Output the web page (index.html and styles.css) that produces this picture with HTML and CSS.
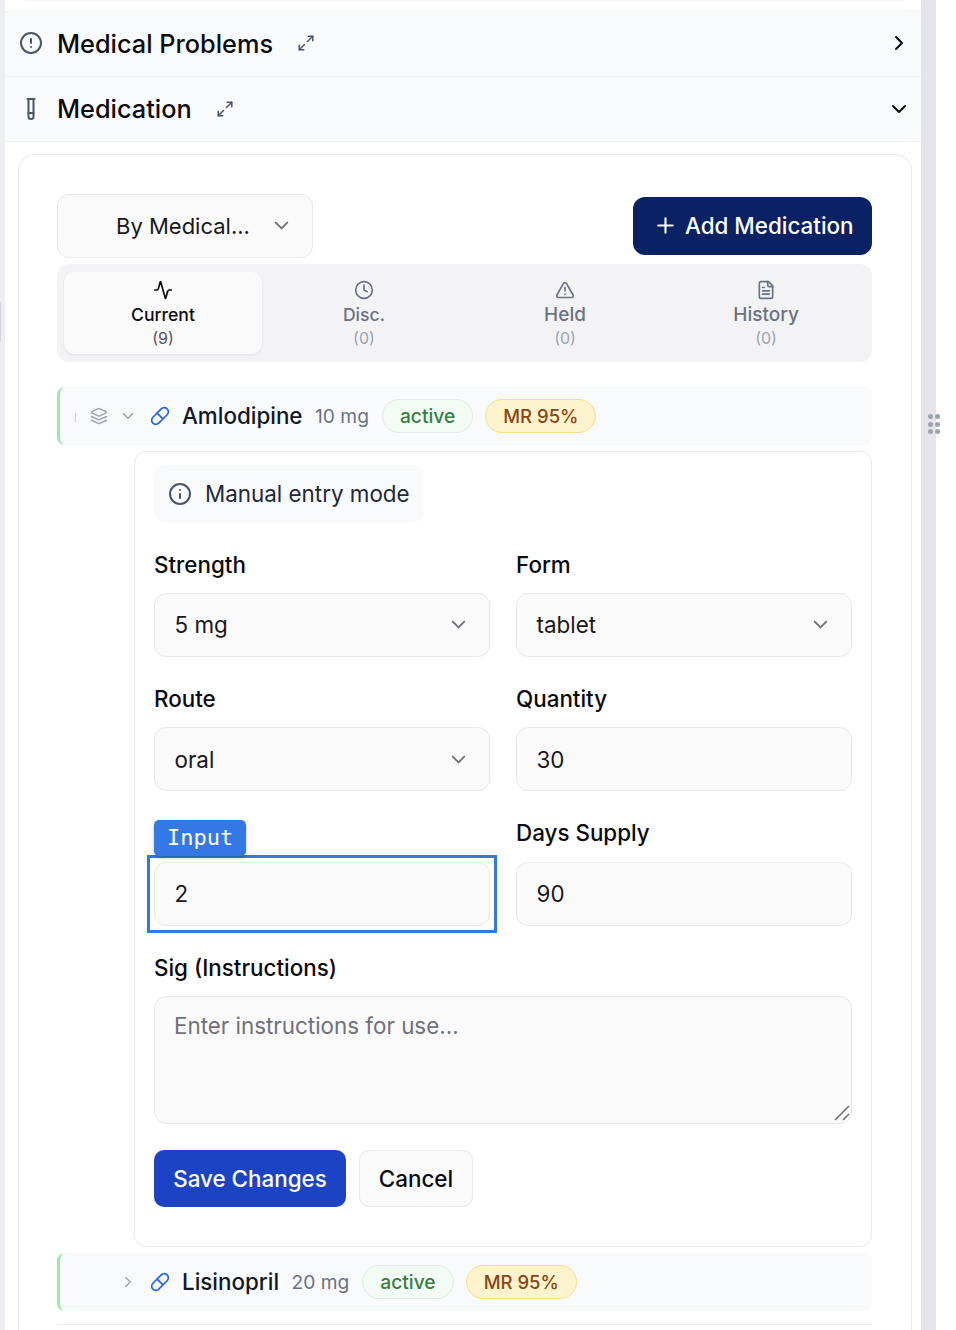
FILE: index.html
```html
<!DOCTYPE html>
<html>
<head>
    <title>Medication</title>
    <meta name="viewport" content="width=device-width, initial-scale=1.0">
    <link rel="stylesheet" href="styles.css">
</head>
<body>
    <svg class="sprites" width="0" height="0">
        <symbol id="i-alert" viewBox="0 0 24 24"><circle cx="12" cy="12" r="10"/><path d="M12 8v4"/><path d="M12 16h.01"/></symbol>
        <symbol id="i-tube" viewBox="0 0 24 24"><path d="M14.5 2v17.5c0 1.4-1.1 2.5-2.5 2.5s-2.5-1.1-2.5-2.5V2"/><path d="M8.5 2h7"/><path d="M14.5 16h-5"/></symbol>
        <symbol id="i-expand" viewBox="0 0 24 24"><path d="M15 3h6v6"/><path d="m21 3-7 7"/><path d="m3 21 7-7"/><path d="M9 21H3v-6"/></symbol>
        <symbol id="i-right" viewBox="0 0 24 24"><path d="m9 18 6-6-6-6"/></symbol>
        <symbol id="i-down" viewBox="0 0 24 24"><path d="m6 9 6 6 6-6"/></symbol>
        <symbol id="i-plus" viewBox="0 0 24 24"><path d="M5 12h14"/><path d="M12 5v14"/></symbol>
        <symbol id="i-activity" viewBox="0 0 24 24"><path d="M22 12h-2.48a2 2 0 0 0-1.93 1.46l-2.35 8.36a.25.25 0 0 1-.48 0L9.24 2.18a.25.25 0 0 0-.48 0l-2.35 8.36A2 2 0 0 1 4.49 12H2"/></symbol>
        <symbol id="i-clock" viewBox="0 0 24 24"><circle cx="12" cy="12" r="10"/><path d="M12 6v6l4 2"/></symbol>
        <symbol id="i-warn" viewBox="0 0 24 24"><path d="m21.73 18-8-14a2 2 0 0 0-3.48 0l-8 14A2 2 0 0 0 4 21h16a2 2 0 0 0 1.73-3"/><path d="M12 9v4"/><path d="M12 17h.01"/></symbol>
        <symbol id="i-file" viewBox="0 0 24 24"><path d="M15 2H6a2 2 0 0 0-2 2v16a2 2 0 0 0 2 2h12a2 2 0 0 0 2-2V7Z"/><path d="M14 2v4a2 2 0 0 0 2 2h4"/><path d="M10 9H8"/><path d="M16 13H8"/><path d="M16 17H8"/></symbol>
        <symbol id="i-layers" viewBox="0 0 24 24"><path d="M12.83 2.18a2 2 0 0 0-1.66 0L2.6 6.08a1 1 0 0 0 0 1.83l8.58 3.91a2 2 0 0 0 1.66 0l8.58-3.9a1 1 0 0 0 0-1.83Z"/><path d="m22 17.65-9.17 4.16a2 2 0 0 1-1.66 0L2 17.65"/><path d="m22 12.65-9.17 4.16a2 2 0 0 1-1.66 0L2 12.65"/></symbol>
        <symbol id="i-pill" viewBox="0 0 24 24"><path d="m10.5 20.5 10-10a4.95 4.95 0 1 0-7-7l-10 10a4.95 4.95 0 1 0 7 7Z"/><path d="m8.5 8.5 7 7"/></symbol>
        <symbol id="i-info" viewBox="0 0 24 24"><circle cx="12" cy="12" r="10"/><path d="M12 16v-4"/><path d="M12 8h.01"/></symbol>
    </svg>

    <div class="layout">
        <div class="side-strip"><span class="side-handle"></span></div>

        <main class="panel">
            <div class="prev-edge"></div>
            <section class="section-head head-first">
                <svg class="icon head-icon"><use href="#i-alert"/></svg>
                <h2>Medical Problems</h2>
                <svg class="icon expand"><use href="#i-expand"/></svg>
                <svg class="icon head-chevron"><use href="#i-right"/></svg>
            </section>
            <section class="section-head">
                <svg class="icon head-icon"><use href="#i-tube"/></svg>
                <h2>Medication</h2>
                <svg class="icon expand"><use href="#i-expand"/></svg>
                <svg class="icon head-chevron"><use href="#i-down"/></svg>
            </section>

            <div class="card">
                <div class="toolbar">
                    <div class="group-select">
                        <span>By Medical...</span>
                        <svg class="icon chevron"><use href="#i-down"/></svg>
                    </div>
                    <button class="add-btn"><svg class="icon plus"><use href="#i-plus"/></svg>Add Medication</button>
                </div>

                <div class="tabs">
                    <div class="tab tab-active">
                        <svg class="icon"><use href="#i-activity"/></svg>
                        <span class="tab-name">Current</span>
                        <span class="tab-count">(9)</span>
                    </div>
                    <div class="tab">
                        <svg class="icon"><use href="#i-clock"/></svg>
                        <span class="tab-name">Disc.</span>
                        <span class="tab-count">(0)</span>
                    </div>
                    <div class="tab tab-large">
                        <svg class="icon"><use href="#i-warn"/></svg>
                        <span class="tab-name">Held</span>
                        <span class="tab-count">(0)</span>
                    </div>
                    <div class="tab tab-large">
                        <svg class="icon"><use href="#i-file"/></svg>
                        <span class="tab-name">History</span>
                        <span class="tab-count">(0)</span>
                    </div>
                </div>

                <div class="med-row med-open">
                    <span class="tick"></span>
                    <svg class="icon layers"><use href="#i-layers"/></svg>
                    <svg class="icon row-chevron"><use href="#i-down"/></svg>
                    <svg class="icon pill"><use href="#i-pill"/></svg>
                    <span class="med-name">Amlodipine</span>
                    <span class="med-dose">10 mg</span>
                    <span class="badge badge-active">active</span>
                    <span class="badge badge-mr">MR 95%</span>
                </div>

                <form class="edit-card">
                    <div class="mode-note">
                        <svg class="icon"><use href="#i-info"/></svg>
                        <span>Manual entry mode</span>
                    </div>

                    <div class="fields">
                        <div class="field">
                            <label>Strength</label>
                            <div class="control">5 mg<svg class="icon chevron"><use href="#i-down"/></svg></div>
                        </div>
                        <div class="field">
                            <label>Form</label>
                            <div class="control">tablet<svg class="icon chevron"><use href="#i-down"/></svg></div>
                        </div>
                        <div class="field">
                            <label>Route</label>
                            <div class="control">oral<svg class="icon chevron"><use href="#i-down"/></svg></div>
                        </div>
                        <div class="field">
                            <label>Quantity</label>
                            <div class="control">30</div>
                        </div>
                        <div class="field field-inspected">
                            <span class="inspect-tag">Input</span>
                            <div class="control">2</div>
                        </div>
                        <div class="field">
                            <label>Days Supply</label>
                            <div class="control">90</div>
                        </div>
                        <div class="field field-wide">
                            <label>Sig (Instructions)</label>
                            <div class="control control-area">
                                Enter instructions for use...
                                <svg class="resize-grip" viewBox="0 0 16 16"><path d="M1 15 15 1"/><path d="M9 15l6-6"/></svg>
                            </div>
                        </div>
                    </div>

                    <div class="form-actions">
                        <button type="button" class="save-btn">Save Changes</button>
                        <button type="button" class="cancel-btn">Cancel</button>
                    </div>
                </form>

                <div class="med-row med-closed">
                    <svg class="icon row-chevron"><use href="#i-right"/></svg>
                    <svg class="icon pill"><use href="#i-pill"/></svg>
                    <span class="med-name">Lisinopril</span>
                    <span class="med-dose">20 mg</span>
                    <span class="badge badge-active">active</span>
                    <span class="badge badge-mr">MR 95%</span>
                </div>
                <div class="row-divider"></div>
            </div>
        </main>

        <div class="resize-bar">
            <div class="grip">
                <i></i><i></i><i></i><i></i><i></i><i></i>
            </div>
        </div>
    </div>
</body>
</html>
```

FILE: styles.css
```css
* { box-sizing: border-box; }

body {
    margin: 0;
    height: 1330px;
    overflow: hidden;
    background: #fff;
    font-family: Inter, "Liberation Sans", sans-serif;
    color: #0b0b0f;
}

.sprites { position: absolute; }

.icon {
    fill: none;
    stroke: currentColor;
    stroke-width: 2;
    stroke-linecap: round;
    stroke-linejoin: round;
    flex: none;
}

.layout {
    display: grid;
    grid-template-columns: 5px 916px 15px 20px;
    height: 1330px;
}

.side-strip {
    background: #eceef2;
    position: relative;
}
.side-handle {
    position: absolute;
    left: 0;
    top: 302px;
    width: 1px;
    height: 39px;
    background: #d4d5da;
}

.prev-edge {
    height: 1px;
    margin: 0 16px 10px 20px;
    background: #f7f7f8;
}

.section-head {
    display: flex;
    align-items: center;
    height: 65px;
    padding: 0 14px 1px;
    background: #f9fafb;
    border-bottom: 1px solid #f1f2f5;
}
.head-first {
    height: 66px;
    padding-bottom: 2px;
    border-top: 1px solid #f1f2f5;
}
.section-head h2 {
    margin: 0 0 0 14px;
    font-size: 25.3px;
    font-weight: 500;
}
.head-icon {
    width: 24px;
    height: 24px;
    color: #4b5563;
}
.expand {
    width: 18px;
    height: 18px;
    margin-left: 24px;
    color: #4b5563;
}
.head-chevron {
    width: 24px;
    height: 24px;
    margin-left: auto;
    margin-right: -4px;
    color: #0b0b0f;
}

.card {
    margin: 11.8px 9px 0 13px;
    padding: 39px 39px 6px 38px;
    background: #fff;
    border: 1px solid #e8e9ec;
    border-bottom: none;
    border-radius: 17px 17px 0 0;
}

.toolbar {
    display: flex;
    align-items: center;
    justify-content: space-between;
    height: 64px;
}
.group-select {
    display: flex;
    align-items: center;
    width: 256px;
    height: 64px;
    padding: 0 19px 0 58px;
    background: #fafafa;
    border: 1px solid #e8e8ea;
    border-radius: 12px;
    font-size: 22px;
    color: #18181b;
}
.chevron {
    width: 23px;
    height: 23px;
    margin-left: auto;
    color: #71717a;
}
.add-btn {
    display: flex;
    align-items: center;
    gap: 7px;
    width: 239px;
    height: 58px;
    padding: 0 0 0 20px;
    border: none;
    border-radius: 12px;
    background: #0a2163;
    color: #fff;
    font-family: inherit;
    font-size: 22.4px;
    font-weight: 500;
}
.plus {
    width: 25px;
    height: 25px;
}

.tabs {
    display: grid;
    grid-template-columns: repeat(4, 1fr);
    column-gap: 3.2px;
    height: 98px;
    margin-top: 6px;
    padding: 8px 7px;
    background: #f3f3f6;
    border-radius: 12px;
}
.tab {
    display: flex;
    flex-direction: column;
    align-items: center;
    padding-top: 8px;
    color: #6b7280;
    font-size: 17.6px;
    font-weight: 500;
    border-radius: 10px;
}
.tab-large { font-size: 19px; }
.tab .icon {
    width: 20px;
    height: 20px;
}
.tab-name {
    line-height: 26px;
    margin-top: 2px;
}
.tab-count {
    font-size: 16px;
    font-weight: 400;
    line-height: 21px;
    color: #9ca3af;
}
.tab-active {
    background: #fafafa;
    color: #0b0b0f;
    box-shadow: 0 1px 3px rgba(0, 0, 0, 0.08);
}
.tab-active .tab-count { color: #52525b; }

.med-row {
    position: relative;
    display: flex;
    align-items: center;
    height: 58px;
    background: #f9fafb;
    border-left: 3px solid #9be8ad;
    border-radius: 8px;
}
.med-open { margin-top: 25px; padding-left: 30px; }
.med-closed { margin-top: 6px; padding-left: 59px; }
.tick {
    position: absolute;
    left: 15px;
    top: 26px;
    width: 1px;
    height: 9px;
    background: #d4d4d8;
}
.layers {
    width: 18px;
    height: 18px;
    color: #9ca3af;
}
.row-chevron {
    width: 18px;
    height: 18px;
    margin-left: 11px;
    color: #9ca3af;
}
.med-closed .row-chevron { margin-left: 0; }
.pill {
    width: 20px;
    height: 20px;
    margin-left: 13px;
    color: #2563eb;
}
.med-name {
    margin-left: 12px;
    font-size: 22.4px;
    font-weight: 500;
    color: #111827;
}
.med-dose {
    margin-left: 12.5px;
    font-size: 19.2px;
    color: #6b7280;
}
.badge {
    display: flex;
    align-items: center;
    height: 34px;
    padding: 0 17px;
    border-radius: 17px;
    font-size: 19.2px;
    font-weight: 500;
    border: 1px solid;
}
.badge-active {
    margin-left: 13px;
    background: #f2fbf4;
    border-color: #e4e9e6;
    color: #3a7d44;
}
.badge-mr {
    margin-left: 12px;
    font-size: 18.5px;
    background: #fdf3cc;
    border-color: #f8e08e;
    color: #8a4515;
}

.edit-card {
    margin: 6px 0 0 77px;
    height: 796px;
    padding: 13px 19px 0;
    border: 1px solid #e8e9ec;
    border-radius: 12px;
    background: #fff;
}
.mode-note {
    display: inline-flex;
    align-items: center;
    gap: 13px;
    height: 58px;
    padding: 0 13px 0 14px;
    background: #f9fafb;
    border-radius: 10px;
    font-size: 22.4px;
    color: #1f2937;
    vertical-align: top;
}
.mode-note .icon {
    width: 24px;
    height: 24px;
    color: #4b5563;
}

.fields {
    display: grid;
    grid-template-columns: 1fr 1fr;
    column-gap: 26px;
    row-gap: 28px;
    margin-top: 27.8px;
}
.field { position: relative; }
.field-wide { grid-column: span 2; }
.field label {
    display: block;
    height: 28px;
    margin-bottom: 14.4px;
    font-size: 22.4px;
    font-weight: 500;
    line-height: 27px;
}
.control {
    position: relative;
    display: flex;
    align-items: center;
    height: 64px;
    padding: 0 19.5px;
    background: #fafafa;
    border: 1px solid #e8e8ea;
    border-radius: 12px;
    font-size: 22.4px;
    color: #18181b;
}
.control-area {
    height: 128px;
    align-items: flex-start;
    padding-top: 15px;
    padding-left: 19px;
    color: #71717a;
}
.resize-grip {
    position: absolute;
    right: 1px;
    bottom: 2px;
    width: 16px;
    height: 16px;
    fill: none;
    stroke: #666;
    stroke-width: 1.5;
}

.field-inspected { padding-top: 42.4px; }
.field-inspected::after {
    content: "";
    position: absolute;
    left: -7px;
    right: -7px;
    top: 35.6px;
    bottom: -7px;
    border: 3px solid #3578e5;
    pointer-events: none;
}
.inspect-tag {
    position: absolute;
    left: 0;
    top: 0.6px;
    z-index: 1;
    height: 36px;
    padding: 0 13px;
    background: #3578e5;
    border-radius: 5px;
    box-shadow: 0 2px 4px rgba(0, 0, 0, 0.2);
    color: #fff;
    font-family: "DejaVu Sans Mono", monospace;
    font-size: 22px;
    line-height: 36px;
}

.form-actions {
    display: flex;
    gap: 13px;
    margin-top: 26px;
}
.form-actions button {
    height: 57px;
    border-radius: 10px;
    font-family: inherit;
    font-size: 22.4px;
    font-weight: 500;
}
.save-btn {
    width: 192px;
    border: none;
    background: #1c43c4;
    color: #fff;
}
.cancel-btn {
    width: 114px;
    border: 1px solid #e8e8ea;
    background: #fafafa;
    color: #0b0b0f;
}

.row-divider {
    height: 1px;
    margin-top: 13px;
    background: #e8e9ec;
}

.resize-bar {
    position: relative;
    background: #e4e4ea;
}
.grip {
    position: absolute;
    left: 7px;
    top: 414px;
    display: grid;
    grid-template-columns: repeat(2, 5px);
    row-gap: 2.5px;
    column-gap: 1.5px;
}
.grip i {
    width: 5px;
    height: 5px;
    border-radius: 50%;
    background: #9ca3af;
}
```
